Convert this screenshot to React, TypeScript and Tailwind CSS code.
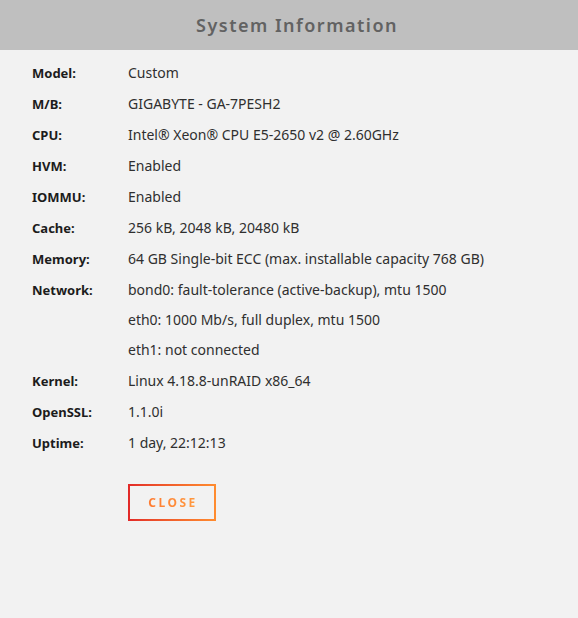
import React from "react";

const rows: [string, string[]][] = [
  ["Model:", ["Custom"]],
  ["M/B:", ["GIGABYTE - GA-7PESH2"]],
  ["CPU:", ["Intel® Xeon® CPU E5-2650 v2 @ 2.60GHz"]],
  ["HVM:", ["Enabled"]],
  ["IOMMU:", ["Enabled"]],
  ["Cache:", ["256 kB, 2048 kB, 20480 kB"]],
  ["Memory:", ["64 GB Single-bit ECC (max. installable capacity 768 GB)"]],
  ["Network:", ["bond0: fault-tolerance (active-backup), mtu 1500", "eth0: 1000 Mb/s, full duplex, mtu 1500", "eth1: not connected"]],
  ["Kernel:", ["Linux 4.18.8-unRAID x86_64"]],
  ["OpenSSL:", ["1.1.0i"]],
  ["Uptime:", ["1 day, 22:12:13"]],
];

export default function App() {
  return (
    <div className="w-[578px] h-[618px] bg-[#f2f2f2] font-['Noto_Sans',sans-serif] overflow-hidden">
      <div className="h-[50px] bg-[#bfbfbf] flex items-center justify-center pl-[16px]">
        <h1 className="text-[18px] font-semibold tracking-[1.5px] text-[#626262]">System Information</h1>
      </div>
      <div className="pt-[8px] pl-[32px]">
        {rows.map(([label, values]) => (
          <div key={label} className="flex pb-[1px]">
            <div className="w-[96px] text-[13px] font-bold text-[#1c1c1c] leading-[30px]">{label}</div>
            <div className="flex flex-col">
              {values.map((v) => (
                <div key={v} className="text-[14px] text-[#2f2f2f] leading-[30px]">{v}</div>
              ))}
            </div>
          </div>
        ))}
        <div className="pl-[96px] pt-[25px]">
          <button className="w-[88px] h-[37px] p-[2px] bg-gradient-to-r from-[#e22828] to-[#ff8c2f]">
            <span className="flex w-full h-full items-center justify-center bg-[#f2f2f2] text-[12px] font-bold tracking-[2.5px] text-[#ff8c2f] pl-[2px]">
              <span className="bg-gradient-to-r from-[#ff7a30] to-[#ff9a40] bg-clip-text text-transparent">CLOSE</span>
            </span>
          </button>
        </div>
      </div>
    </div>
  );
}
